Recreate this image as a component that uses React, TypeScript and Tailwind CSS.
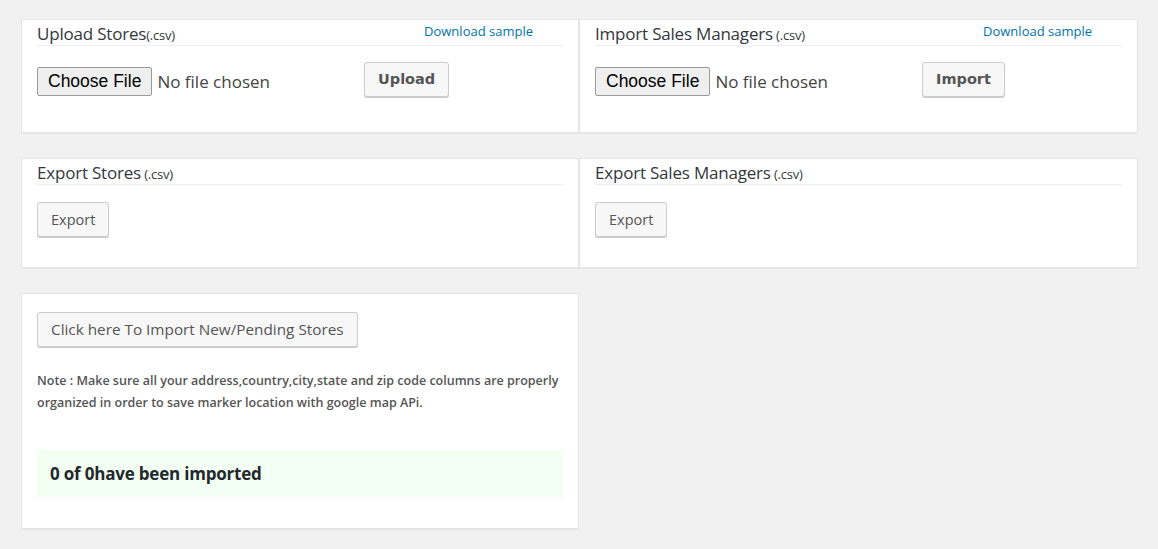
import React from 'react'

const sans = "font-['Open_Sans','Noto_Sans',sans-serif]"

function CardTitle({ title, note, sample }: { title: string; note: string; sample?: boolean }) {
  return (
    <div className="flex items-start justify-between border-b border-[#eeeeee] h-[26px]">
      <h3 className="pt-[3px] text-[17px] leading-[22px] text-[#32373c] tracking-[-0.2px]">
        {title}
        <span className="text-[13px]">{note}</span>
      </h3>
      {sample && (
        <a href="#" className="mr-[30px] pt-[2px] text-[13px] leading-[18px] text-[#0073aa]">
          Download sample
        </a>
      )}
    </div>
  )
}

function FilePicker() {
  return (
    <label className="flex items-center gap-[5px] cursor-pointer">
      <span className="h-[29px] px-[10px] flex items-center rounded-[2px] border border-[#9a9a9a] bg-[#efefef] font-['Liberation_Sans',Arial,sans-serif] text-[17.5px] text-black">
        Choose File
      </span>
      <span className="text-[17px] text-[#444]">No file chosen</span>
      <input type="file" className="hidden" />
    </label>
  )
}

function ImportCard({ title, note, action }: { title: string; note: string; action: string }) {
  return (
    <div className="bg-white border border-[#e5e5e5] shadow-[0_1px_1px_rgba(0,0,0,0.04)] px-[15px] h-[114px]">
      <CardTitle title={title} note={note} sample />
      <div className="flex items-center mt-[16px]">
        <div className="w-[327px] pt-[4px]">
          <FilePicker />
        </div>
        <button className="h-[35px] px-[13px] rounded-[3px] border border-[#cccccc] bg-[#f7f7f7] shadow-[0_1px_0_#cccccc] font-['DejaVu_Sans',Verdana,sans-serif] font-bold text-[14.5px] text-[#555]">
          {action}
        </button>
      </div>
    </div>
  )
}

function ExportCard({ title }: { title: string }) {
  return (
    <div className="bg-white border border-[#e5e5e5] shadow-[0_1px_1px_rgba(0,0,0,0.04)] px-[15px] h-[110px]">
      <CardTitle title={title} note=" (.csv)" />
      <button className="mt-[17px] h-[35px] px-[13px] rounded-[3px] border border-[#cccccc] bg-[#f7f7f7] shadow-[0_1px_0_#cccccc] text-[14.5px] text-[#555]">
        Export
      </button>
    </div>
  )
}

export default function App() {
  return (
    <div className={`${sans} min-h-[549px] bg-[#f1f1f1] pl-[21px] pt-[19px]`}>
      <div className="grid grid-cols-[558px_559px] gap-y-[25px]">
        <ImportCard title="Upload Stores" note="(.csv)" action="Upload" />
        <ImportCard title="Import Sales Managers" note=" (.csv)" action="Import" />
        <ExportCard title="Export Stores" />
        <ExportCard title="Export Sales Managers" />

        <div className="bg-white border border-[#e5e5e5] shadow-[0_1px_1px_rgba(0,0,0,0.04)] px-[15px] pt-[18px] h-[236px]">
          <button className="h-[35px] px-[13px] rounded-[3px] border border-[#cccccc] bg-[#f7f7f7] shadow-[0_1px_0_#cccccc] text-[15.3px] text-[#555]">
            Click here To Import New/Pending Stores
          </button>
          <p className="mt-[23px] text-[12.5px] leading-[22px] font-semibold text-[#555]">
            Note : Make sure all your address,country,city,state and zip code columns are properly organized in order to save marker location with google map APi.
          </p>
          <div className="mt-[36px] h-[47px] bg-[#f4fff4] pl-[13px] flex items-center">
            <h2 className="text-[17px] font-bold text-[#23282d] tracking-[-0.2px]">0 of 0have been imported</h2>
          </div>
        </div>
      </div>
    </div>
  )
}
